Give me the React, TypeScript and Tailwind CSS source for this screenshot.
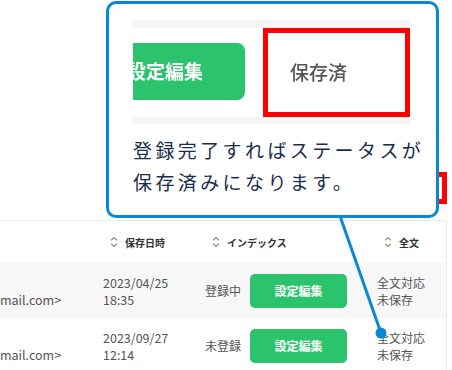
const font = "font-['Noto_Sans_CJK_JP','Noto_Sans',sans-serif]"

function SortIcon() {
	return (
		<svg width="8" height="12" viewBox="0 0 8 12" className="shrink-0">
			<path d="M1.2 4.2 L4 1.6 L6.8 4.2" fill="none" stroke="#8a8a8a" strokeWidth="1.2" />
			<path d="M1.2 7.8 L4 10.4 L6.8 7.8" fill="none" stroke="#8a8a8a" strokeWidth="1.2" />
		</svg>
	)
}

const rows = [
	{ date: "2023/04/25", time: "18:35", status: "登録中", bg: "bg-[#f7f7f7]" },
	{ date: "2023/09/27", time: "12:14", status: "未登録", bg: "bg-white" },
]

function HeaderCell({ label }: { label: string }) {
	return (
		<div className="flex items-center gap-[7px] pl-[7px]">
			<SortIcon />
			<span className="text-[10px] font-bold text-[#333]">{label}</span>
		</div>
	)
}

export default function App() {
	return (
		<div className={`relative h-[370px] w-[452px] overflow-hidden bg-white ${font}`}>
			<div className="h-[220px]" />

			{/* highlight box behind the callout */}
			<div className="absolute left-[300px] top-[172px] h-[32px] w-[147px] border-[5px] border-[#ff0000]" />

			{/* table */}
			<div className="w-[447px] border-t border-r border-[#ececec]">
				<div className="grid h-[42px] grid-cols-[103px_102px_172px_1fr] items-center">
					<div />
					<HeaderCell label="保存日時" />
					<HeaderCell label="インデックス" />
					<HeaderCell label="全文" />
				</div>
				{rows.map((r) => (
					<div
						key={r.date}
						className={`grid h-[55px] grid-cols-[103px_102px_172px_1fr] items-center text-[12.5px] leading-[17px] text-[#555] ${r.bg}`}
					>
						<div className="flex flex-col pt-[17px]">
							<span>mail.com&gt;</span>
						</div>
						<div className="flex flex-col">
							<span>{r.date}</span>
							<span>{r.time}</span>
						</div>
						<div className="flex items-center gap-[9px]">
							<span className="text-[12px]">{r.status}</span>
							<button className="h-[34px] w-[97px] rounded-[5px] bg-[#2bc46d] text-[12px] font-bold text-white">
								設定編集
							</button>
						</div>
						<div className="flex flex-col text-[12px]">
							<span>全文対応</span>
							<span>未保存</span>
						</div>
					</div>
				))}
			</div>

			{/* callout */}
			<div className="absolute left-[106px] top-[1px] h-[217px] w-[333px] rounded-[10px] border-[3px] border-[#0a89d2] bg-white pl-[24px] pt-[16px]">
				<div className="relative h-[104px] w-[277px] overflow-hidden bg-white">
					<div className="h-[8px] bg-[#f5f5f5]" />
					<div className="absolute bottom-0 left-0 h-[7px] w-full bg-[#f5f5f5]" />
					<div className="absolute left-[-48px] top-[23px] flex h-[57px] w-[160px] items-center justify-center rounded-[8px] bg-[#2bc46d] text-[19px] font-bold text-white blur-[0.3px]">
						設定編集
					</div>
					<div className="absolute left-[130px] top-[8px] flex h-[89px] w-[147px] items-center border-[5px] border-[#ff0000] pl-[22px] text-[19px] font-medium text-[#555] blur-[0.3px]">
						保存済
					</div>
				</div>
				<p className="mt-[10px] text-[19px] leading-[32px] tracking-[3.4px] text-[#1b2d4e]">
					登録完了すればステータスが
					<br />
					保存済みになります。
				</p>
			</div>

			{/* connector */}
			<svg className="absolute left-0 top-0" width="452" height="370">
				<line x1="340" y1="216" x2="381" y2="333" stroke="#0a89d2" strokeWidth="3" />
				<circle cx="381" cy="333" r="5.5" fill="#0a89d2" />
			</svg>
		</div>
	)
}
